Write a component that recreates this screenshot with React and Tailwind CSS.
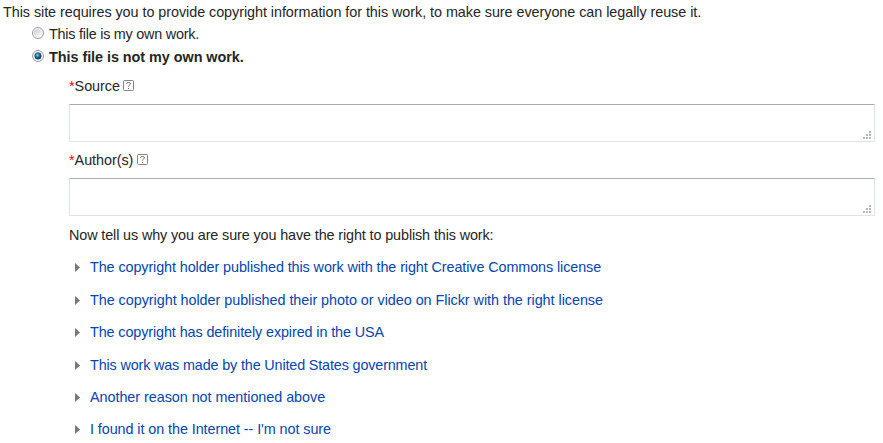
const reasons = [
  { text: 'The copyright holder published this work with the right Creative Commons license', height: 'h-[33px]', tracking: 'tracking-[-0.1px]' },
  { text: 'The copyright holder published their photo or video on Flickr with the right license', height: 'h-8', tracking: 'tracking-[-0.045px]' },
  { text: 'The copyright has definitely expired in the USA', height: 'h-[33px]', tracking: 'tracking-[-0.11px]' },
  { text: 'This work was made by the United States government', height: 'h-8', tracking: 'tracking-[-0.155px]' },
  { text: 'Another reason not mentioned above', height: 'h-8', tracking: 'tracking-[-0.05px]' },
  { text: "I found it on the Internet -- I'm not sure", height: 'h-4', tracking: 'tracking-[-0.08px]' },
];

function Radio({ checked }) {
  return (
    <svg className="mb-[2px] h-3 w-3 shrink-0" viewBox="0 0 12 12" aria-hidden="true">
      <defs>
        <linearGradient id="radioFace" x1="0" y1="0" x2="1" y2="1">
          <stop offset="0.1" stopColor="#cdd0d3" />
          <stop offset="0.85" stopColor="#f8f8f8" />
        </linearGradient>
        <radialGradient id="radioDot" cx="0.4" cy="0.35" r="0.65">
          <stop offset="0" stopColor="#8bdcf8" />
          <stop offset="0.4" stopColor="#2687b5" />
          <stop offset="1" stopColor="#0b2f4c" />
        </radialGradient>
      </defs>
      <circle cx="6" cy="6" r="5.5" fill="#f8f8f8" stroke="#9a9b9b" />
      <circle cx="6" cy="6" r="4" fill="url(#radioFace)" />
      {checked && <circle cx="6" cy="6" r="3.2" fill="url(#radioDot)" stroke="#153e5e" strokeWidth="0.6" />}
    </svg>
  );
}

function Help() {
  return (
    <svg className="mb-0.5 ml-[3.5px] h-[11px] w-[11px] shrink-0" viewBox="0 0 11 11" fill="none" aria-hidden="true">
      <rect x="0.5" y="0.5" width="10" height="10" rx="1" stroke="#858585" />
      <path d="M3.5 4V3.6Q3.5 2.5 5.5 2.5Q7.5 2.5 7.5 3.8Q7.5 4.6 6.4 5.1Q5.5 5.6 5.5 6.7M5.5 8V9" stroke="#707070" />
    </svg>
  );
}

function Field({ label }) {
  return (
    <div className="flex flex-col">
      <div className="flex h-9 items-center">
        <span className="text-[#f00]">*</span>
        <span className="tracking-[-0.05px]">{label}</span>
        <Help />
      </div>
      <div className="flex h-[38px] w-[806px] items-end justify-end rounded-[1px] border border-t-[#a9a9b0] border-r-[#dfe3eb] border-b-[#e0e5ec] border-l-[#dfe3eb] p-[2px] pr-[3px]">
        <svg className="h-2 w-2" viewBox="0 0 8 8" fill="#b8b8b8" aria-hidden="true">
          <path d="M6 0h2v2H6zM3 3h2v2H3zM6 3h2v2H6zM0 6h2v2H0zM3 6h2v2H3zM6 6h2v2H6z" />
        </svg>
      </div>
    </div>
  );
}

export default function App() {
  return (
    <main className="h-[443px] w-[883px] overflow-hidden bg-white font-['Liberation_Sans',Arial,sans-serif] text-[14.4px] leading-4 whitespace-nowrap text-[#252525]">
      <p className="flex h-[25px] items-center pb-[2px] pl-[3px] tracking-[-0.057px]">
        This site requires you to provide copyright information for this work, to make sure everyone can legally reuse it.
      </p>
      <div className="flex h-[18px] items-center pl-8">
        <Radio />
        <span className="ml-[5px] tracking-[-0.24px]">This file is my own work.</span>
      </div>
      <div className="flex h-[25px] items-center pt-[3px] pl-8">
        <Radio checked />
        <span className="ml-[5px] font-bold tracking-[-0.04px]">This file is not my own work.</span>
      </div>
      <section className="pl-[69px]">
        <Field label="Source" />
        <Field label="Author(s)" />
        <p className="flex h-[43px] items-center pb-[5px] tracking-[-0.12px]">
          Now tell us why you are sure you have the right to publish this work:
        </p>
        <ul>
          {reasons.map(({ text, height, tracking }) => (
            <li key={text} className={`flex items-start pl-[6px] ${height}`}>
              <svg className="mt-1 h-[9px] w-[5px] shrink-0" viewBox="0 0 5 9" fill="#797979" aria-hidden="true">
                <path d="M0 0L5 4.5L0 9Z" />
              </svg>
              <a className={`ml-[10px] text-[#0645ad] ${tracking}`} href="#">{text}</a>
            </li>
          ))}
        </ul>
      </section>
    </main>
  );
}
